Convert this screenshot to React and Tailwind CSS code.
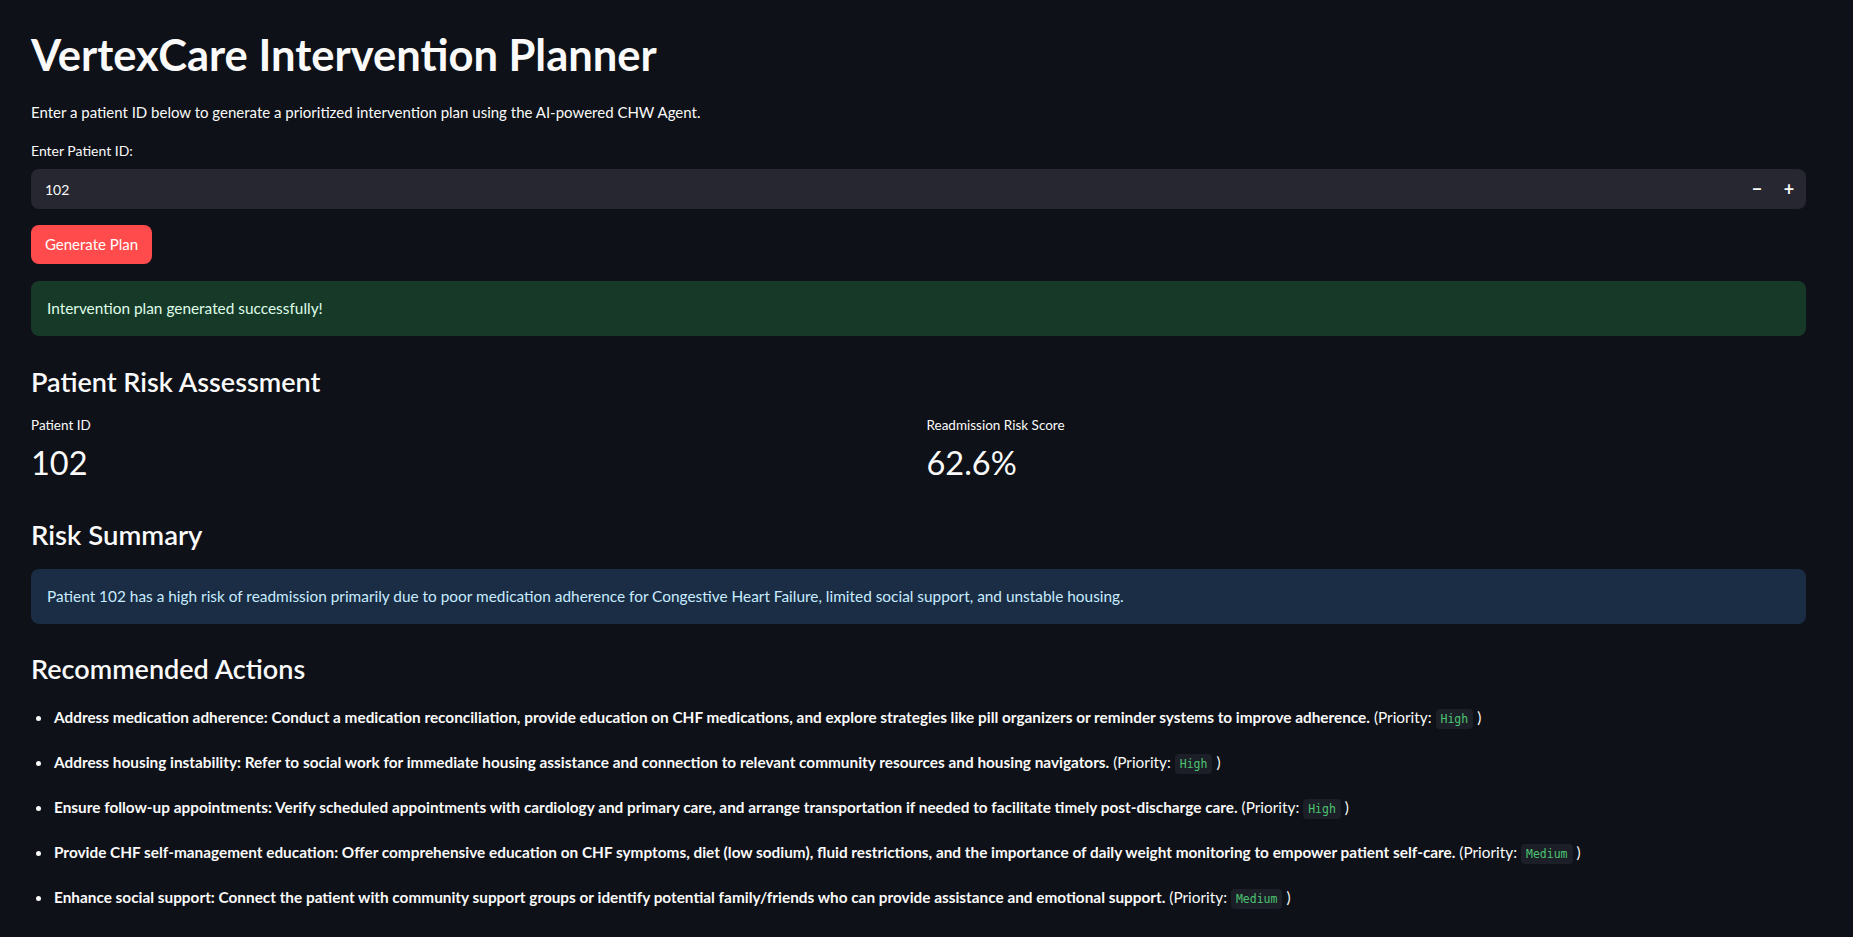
import React from 'react';

const actions = [
  {
    text: 'Address medication adherence: Conduct a medication reconciliation, provide education on CHF medications, and explore strategies like pill organizers or reminder systems to improve adherence.',
    priority: 'High',
  },
  {
    text: 'Address housing instability: Refer to social work for immediate housing assistance and connection to relevant community resources and housing navigators.',
    priority: 'High',
  },
  {
    text: 'Ensure follow-up appointments: Verify scheduled appointments with cardiology and primary care, and arrange transportation if needed to facilitate timely post-discharge care.',
    priority: 'High',
  },
  {
    text: 'Provide CHF self-management education: Offer comprehensive education on CHF symptoms, diet (low sodium), fluid restrictions, and the importance of daily weight monitoring to empower patient self-care.',
    priority: 'Medium',
  },
  {
    text: 'Enhance social support: Connect the patient with community support groups or identify potential family/friends who can provide assistance and emotional support.',
    priority: 'Medium',
  },
];

function Metric({ label, value }) {
  return (
    <div className="flex flex-col">
      <div className="mt-[15px] text-[13.5px] leading-[20px] text-[#fafafa]">{label}</div>
      <div className="mt-[6px] text-[32.5px] leading-[44px] text-[#fafafa]">{value}</div>
    </div>
  );
}

export default function App() {
  return (
    <div
      className="min-h-[937px] bg-[#0e1117] text-[#fafafa] pl-[31px] pr-[47px] pt-[28px] pb-10"
      style={{ fontFamily: 'Lato, "Noto Sans", sans-serif' }}
    >
      <h1 className="text-[43.5px] leading-[53px] font-bold">VertexCare Intervention Planner</h1>

      <p className="mt-[19px] text-[15px] leading-[24px]">
        Enter a patient ID below to generate a prioritized intervention plan using the AI-powered CHW Agent.
      </p>

      <label className="block mt-[17px] text-[14px] leading-[20px]">Enter Patient ID:</label>
      <div className="mt-[8px] h-[40px] rounded-lg bg-[#262730] flex items-center pl-[14px] pr-[1px]">
        <span className="flex-1 text-[14px]">102</span>
        <span className="w-[32px] text-center text-[18px] font-bold leading-none">−</span>
        <span className="w-[32px] text-center text-[18px] font-bold leading-none">+</span>
      </div>

      <button
        type="button"
        className="mt-[16px] h-[39px] w-[121px] rounded-lg bg-[#ff4b4b] text-[15px] text-white"
      >
        Generate Plan
      </button>

      <div className="mt-[17px] h-[55px] rounded-lg bg-[#173928] flex items-center px-[16px] text-[15.4px] text-[#dffde9]">
        Intervention plan generated successfully!
      </div>

      <h3 className="mt-[28px] text-[27px] leading-[36px] font-semibold">Patient Risk Assessment</h3>
      <div className="grid grid-cols-2 gap-4">
        <Metric label="Patient ID" value="102" />
        <Metric label="Readmission Risk Score" value="62.6%" />
      </div>

      <h3 className="mt-[32px] text-[27.5px] leading-[36px] font-semibold">Risk Summary</h3>
      <div className="mt-[16px] h-[55px] rounded-lg bg-[#1a2d44] flex items-center px-[16px] text-[15.4px] text-[#c7ebff]">
        Patient 102 has a high risk of readmission primarily due to poor medication adherence for Congestive Heart Failure, limited social support, and unstable housing.
      </div>

      <h3 className="mt-[27px] text-[27px] leading-[36px] font-semibold">Recommended Actions</h3>
      <ul className="mt-[19px] flex flex-col gap-[21px]">
        {actions.map((a) => (
          <li key={a.text} className="flex items-center h-[24px] text-[15.35px]">
            <span className="w-[14px] flex justify-center">
              <span className="w-[5px] h-[5px] rounded-full bg-[#fafafa]" />
            </span>
            <span className="ml-[9px]">
              <span className="font-bold">{a.text}</span>{' '}
              (Priority:{' '}
              <code
                className="inline-block rounded bg-[#1c1f27] px-[5px] text-[11.5px] leading-[20px] text-[#4cc372]"
                style={{ fontFamily: '"DejaVu Sans Mono", monospace' }}
              >
                {a.priority}
              </code>{' '}
              )
            </span>
          </li>
        ))}
      </ul>
    </div>
  );
}
